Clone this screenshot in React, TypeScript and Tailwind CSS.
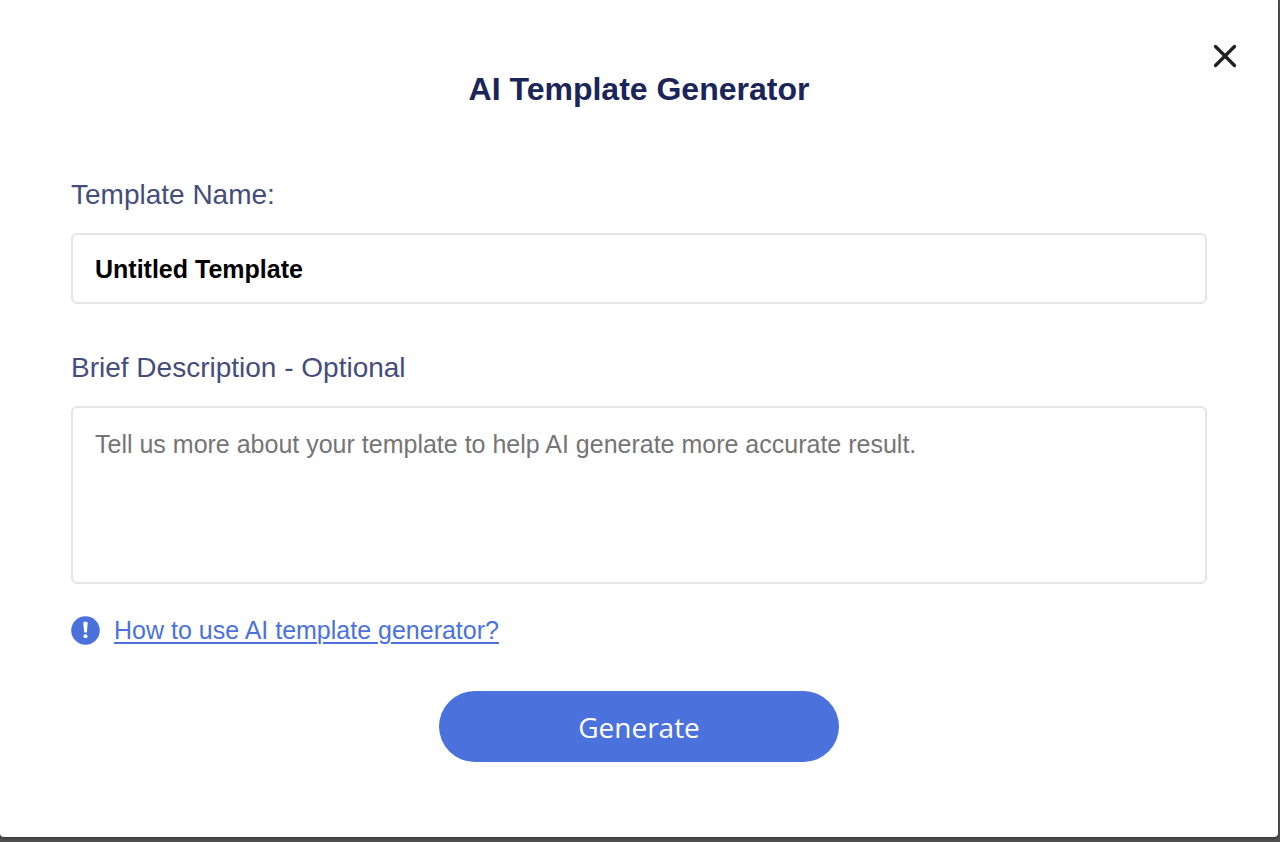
import { useState } from 'react';

const labelClass = 'block text-[28px] leading-9 text-[#454d7c]';
const fieldClass = 'block w-full rounded-md border-2 border-[#e5e5e5] bg-white px-[22px] text-[25px] text-black outline-none focus:border-[#4b72dc]';

export default function App() {
  const [name, setName] = useState('Untitled Template');
  const [description, setDescription] = useState('');

  return (
    <div className="min-h-screen bg-[#505050] pb-[5px] pr-[2px] font-['Liberation_Sans',Arial,sans-serif]">
      <div role="dialog" aria-labelledby="dialog-title" className="relative rounded-b-sm bg-white px-[71px] pb-[75px] pt-[69px] shadow-[0_1px_3px_#333333]">
        <button type="button" aria-label="Close" className="absolute right-[40px] top-[43px] cursor-pointer text-[#202020]">
          <svg className="size-[26px]" viewBox="0 0 26 26" fill="none" stroke="currentColor" strokeWidth="3.3" strokeLinecap="round">
            <path d="M3.5 3.5 22.5 22.5M22.5 3.5 3.5 22.5" />
          </svg>
        </button>

        <h1 id="dialog-title" className="text-center text-[32px] font-bold leading-10 text-[#1b2559]">AI Template Generator</h1>

        <form className="mt-[68px]" onSubmit={(e) => e.preventDefault()}>
          <label htmlFor="template-name" className={labelClass}>Template Name:</label>
          <input
            id="template-name"
            type="text"
            value={name}
            onChange={(e) => setName(e.target.value)}
            className={`${fieldClass} mt-5 h-[71px] pt-[2px] font-bold`}
          />

          <label htmlFor="template-description" className={`${labelClass} mt-[46px]`}>Brief Description - Optional</label>
          <textarea
            id="template-description"
            value={description}
            onChange={(e) => setDescription(e.target.value)}
            placeholder="Tell us more about your template to help AI generate more accurate result."
            className={`${fieldClass} mt-5 h-[178px] resize-none py-5 leading-8 placeholder:text-[#757575]`}
          />

          <div className="mt-[30px] flex items-center gap-[14px]">
            <svg className="size-[29px] shrink-0" viewBox="0 0 29 29" aria-hidden="true">
              <circle cx="14.5" cy="14.5" r="14.3" fill="#4b72dc" />
              <path d="M12.3 7.2Q12.3 5.4 14.5 5.4T16.7 7.2L15.9 15.6Q15.7 16.8 14.5 16.8T13.1 15.6Z" fill="#ffffff" />
              <circle cx="14.5" cy="20.2" r="2" fill="#ffffff" />
            </svg>
            <a href="#how-to-use" className="text-[25px] leading-8 text-[#4b72dc] underline decoration-2 underline-offset-3">How to use AI template generator?</a>
          </div>

          <button type="submit" className="mx-auto mt-[45px] block h-[71px] w-full max-w-[400px] cursor-pointer rounded-full bg-[#4b72dc] font-['Open_Sans',sans-serif] text-[28px] leading-10 text-white">
            Generate
          </button>
        </form>
      </div>
    </div>
  );
}
